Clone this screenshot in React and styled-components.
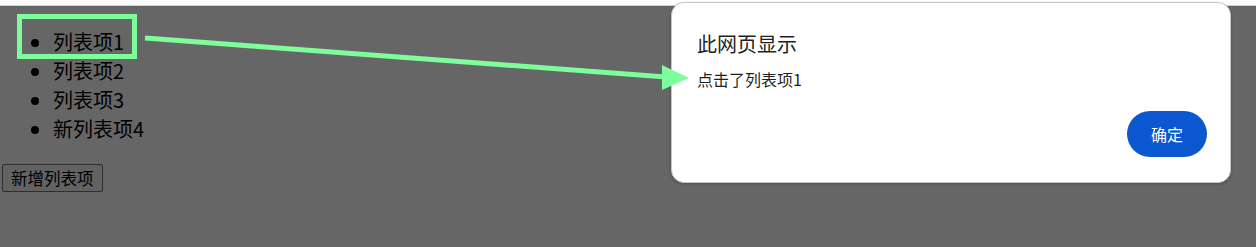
import React from "react";
import styled, { createGlobalStyle } from "styled-components";

const GlobalStyle = createGlobalStyle`
  html, body {
    margin: 0;
    padding: 0;
    background: #666666;
  }
  body {
    font-family: "Noto Sans CJK SC", "Noto Sans", sans-serif;
    width: 1256px;
    height: 247px;
    overflow: hidden;
  }
`;

const Screen = styled.div`
  position: relative;
  width: 1256px;
  height: 247px;
  display: flex;
  flex-direction: column;
`;

const TopStrip = styled.div`
  height: 5px;
  background: #ffffff;
  border-bottom: 1px solid #d4d4d4;
  flex: none;
`;

const Page = styled.div`
  flex: 1;
  background: #666666;
  padding: 0 0 0 2px;
  display: flex;
  flex-direction: column;
  align-items: flex-start;
`;

const List = styled.ul`
  margin: 21px 0 21px 0;
  padding-left: 51px;
  font-size: 20px;
  line-height: 29px;
  color: #000;
  list-style: disc;
`;

const Item = styled.li`
  &::marker {
    font-size: 20px;
  }
`;

const AddButton = styled.button`
  font-family: "Noto Sans CJK SC", sans-serif;
  font-size: 16.5px;
  line-height: 24px;
  height: 28px;
  padding: 0 8px;
  background: #626262;
  color: #000;
  border: 1px solid #2e2e2e;
  border-radius: 2px;
`;

// annotation layer sits above the alert, like a marked-up screenshot
const Annotation = styled.svg`
  position: absolute;
  top: 0;
  left: 0;
  z-index: 2;
  pointer-events: none;
`;

const Dialog = styled.div`
  position: absolute;
  z-index: 1;
  left: 671px;
  top: 2px;
  width: 560px;
  height: 181px;
  box-sizing: border-box;
  background: #ffffff;
  border: 1px solid #c6c6c6;
  border-radius: 13px;
  box-shadow: 0 1px 3px rgba(0, 0, 0, 0.25);
  padding: 28px 23px 25px 25px;
  display: flex;
  flex-direction: column;
`;

const Title = styled.div`
  font-size: 20px;
  line-height: 26px;
  color: #1f1f1f;
`;

const Message = styled.div`
  margin-top: 12px;
  font-size: 16px;
  line-height: 20px;
  color: #1f1f1f;
`;

const Actions = styled.div`
  margin-top: auto;
  display: flex;
  justify-content: flex-end;
`;

const OkButton = styled.button`
  width: 80px;
  height: 46px;
  border: none;
  border-radius: 23px;
  background: #0b57d0;
  color: #ffffff;
  font-family: "Noto Sans CJK SC", sans-serif;
  font-size: 16px;
`;

const GREEN = "#7dfd9c";

export default function App() {
  const items = ["列表项1", "列表项2", "列表项3", "新列表项4"];
  return (
    <>
      <GlobalStyle />
      <Screen>
        <TopStrip />
        <Page>
          <List>
            {items.map((t) => (
              <Item key={t}>{t}</Item>
            ))}
          </List>
          <AddButton>新增列表项</AddButton>
        </Page>

        <Dialog>
          <Title>此网页显示</Title>
          <Message>点击了列表项1</Message>
          <Actions>
            <OkButton>确定</OkButton>
          </Actions>
        </Dialog>

        <Annotation width="1256" height="247" viewBox="0 0 1256 247">
          <rect x="19.5" y="16.5" width="115" height="40" fill="none" stroke={GREEN} strokeWidth="5" />
          <line x1="145" y1="38" x2="666" y2="77" stroke={GREEN} strokeWidth="5" />
          <polygon points="662,65 689,78 662,90" fill={GREEN} />
        </Annotation>
      </Screen>
    </>
  );
}
